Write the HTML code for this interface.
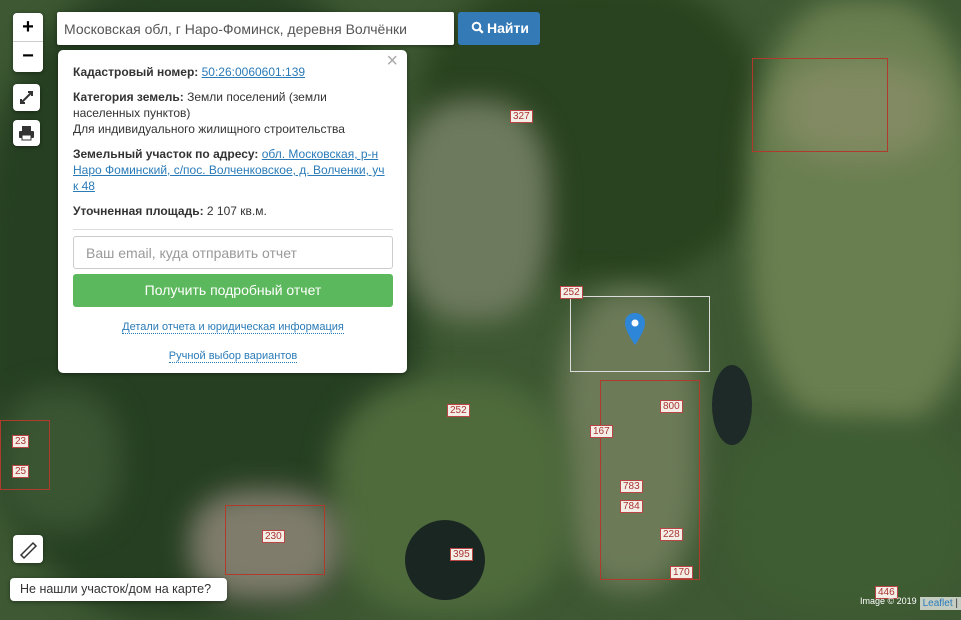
<!DOCTYPE html>
<html><head><meta charset="utf-8"><style>
*{box-sizing:border-box;margin:0;padding:0}
body{width:961px;height:612px;overflow:hidden;font-family:"Liberation Sans",Arial,sans-serif;position:relative;background:#3d5832}
.bl{position:absolute;border-radius:40%;filter:blur(14px)}
.box{position:absolute;background:#fff;border-radius:4px;box-shadow:0 1px 4px rgba(0,0,0,.4)}
.pl{position:absolute;border:1px solid #b03a2b}
.lbl{position:absolute;background:#f4efe6;color:#a33;font-size:10px;padding:0 2px;border:1px solid #b44}
a{color:#2a7bb8}
</style></head><body>
<!-- map -->
<div class="bl" style="left:-20px;top:-20px;width:440px;height:640px;background:#263f22"></div>
<div class="bl" style="left:420px;top:-20px;width:340px;height:300px;background:#29421f"></div>
<div class="bl" style="left:750px;top:0;width:230px;height:430px;background:#6a7f50"></div>
<div class="bl" style="left:780px;top:60px;width:160px;height:100px;background:#818a62"></div>
<div class="bl" style="left:400px;top:100px;width:150px;height:220px;background:#6e7a5e"></div>
<div class="bl" style="left:560px;top:290px;width:140px;height:300px;background:#6c7a58"></div>
<div class="bl" style="left:330px;top:380px;width:240px;height:232px;background:#4f6b3c"></div>
<div class="bl" style="left:190px;top:490px;width:150px;height:110px;background:#7f7c6c"></div>
<div class="bl" style="left:730px;top:420px;width:240px;height:190px;background:#3f5d33"></div>
<div class="bl" style="left:0;top:390px;width:120px;height:140px;background:#3a5532"></div>
<div style="position:absolute;left:712px;top:365px;width:40px;height:80px;border-radius:50%;background:#1d2a28"></div>
<div style="position:absolute;left:405px;top:520px;width:80px;height:80px;border-radius:50%;background:#1a2622"></div>
<div class="pl" style="left:752px;top:58px;width:136px;height:94px"></div>
<div class="pl" style="left:570px;top:296px;width:140px;height:76px;border-color:#ddd"></div>
<div class="pl" style="left:600px;top:380px;width:100px;height:200px"></div>
<div class="pl" style="left:0;top:420px;width:50px;height:70px"></div>
<div class="pl" style="left:225px;top:505px;width:100px;height:70px"></div>
<span class="lbl" style="left:510px;top:110px">327</span>
<span class="lbl" style="left:560px;top:286px">252</span>
<span class="lbl" style="left:447px;top:404px">252</span>
<span class="lbl" style="left:262px;top:530px">230</span>
<span class="lbl" style="left:450px;top:548px">395</span>
<span class="lbl" style="left:12px;top:435px">23</span>
<span class="lbl" style="left:12px;top:465px">25</span>
<span class="lbl" style="left:590px;top:425px">167</span>
<span class="lbl" style="left:660px;top:400px">800</span>
<span class="lbl" style="left:620px;top:480px">783</span>
<span class="lbl" style="left:620px;top:500px">784</span>
<span class="lbl" style="left:660px;top:528px">228</span>
<span class="lbl" style="left:670px;top:566px">170</span>
<span class="lbl" style="left:875px;top:586px">446</span>
<svg style="position:absolute;left:623px;top:312px" width="24" height="36" viewBox="0 0 24 36"><path d="M12 1C6 1 2 5 2 11c0 8 10 22 10 22s10-14 10-22C22 5 18 1 12 1z" fill="#2e86d8"/><circle cx="12" cy="11" r="3.5" fill="#fff"/></svg>
<!-- controls -->
<div class="box" style="left:13px;top:13px;width:30px;height:59px">
<div style="height:29px;border-bottom:1px solid #ccc;text-align:center;font:bold 20px/29px 'Liberation Sans';color:#000">+</div>
<div style="text-align:center;font:bold 20px/28px 'Liberation Sans';color:#000">−</div></div>
<div class="box" style="left:13px;top:84px;width:27px;height:27px"><svg width="27" height="27"><path d="M8 19L19 8M15 8h4v4M8 15v4h4" stroke="#333" stroke-width="2" fill="none"/></svg></div>
<div class="box" style="left:13px;top:120px;width:27px;height:26px"><svg width="27" height="26"><rect x="9" y="6" width="9" height="5" fill="#333"/><rect x="6" y="11" width="15" height="7" rx="1" fill="#333"/><rect x="9" y="15" width="9" height="5" fill="#fff" stroke="#333"/></svg></div>
<div class="box" style="left:57px;top:12px;width:397px;height:33px;border-radius:2px;font-size:14px;color:#555;padding:9px 7px;white-space:nowrap">Московская обл, г Наро-Фоминск, деревня Волчёнки</div>
<div style="position:absolute;left:458px;top:12px;width:82px;height:33px;background:#337ab7;border-radius:3px;color:#fff;font-size:14px;font-weight:bold;line-height:33px;padding-left:13px"><svg width="13" height="13" viewBox="0 0 13 13" style="vertical-align:-1px;margin-right:3px"><circle cx="5.5" cy="5.5" r="3.8" stroke="#fff" stroke-width="2" fill="none"/><path d="M8.3 8.3l3.5 3.5" stroke="#fff" stroke-width="2.4"/></svg>Найти</div>
<!-- popup -->
<div class="box" style="left:58px;top:50px;width:349px;height:323px;border-radius:5px;font-size:12px;color:#333;padding:14px 14px 0 15px;line-height:16px">
<div style="position:absolute;right:9px;top:3px;font-size:20px;color:#aaa">×</div>
<div><b>Кадастровый номер:</b> <a href="#">50:26:0060601:139</a></div>
<div style="margin-top:9px"><b>Категория земель:</b> Земли поселений (земли населенных пунктов)<br>Для индивидуального жилищного строительства</div>
<div style="margin-top:9px"><b>Земельный участок по адресу:</b> <a href="#">обл. Московская, р-н Наро Фоминский, с/пос. Волченковское, д. Волченки, уч к 48</a></div>
<div style="margin-top:9px"><b>Уточненная площадь:</b> 2 107 кв.м.</div>
<div style="border-top:1px solid #ddd;margin-top:10px"></div>
<div style="margin-top:6px;height:33px;border:1px solid #ccc;border-radius:3px;color:#999;font-size:14px;padding:8px 12px">Ваш email, куда отправить отчет</div>
<div style="margin-top:5px;height:33px;background:#5cb85c;border-radius:3px;color:#fff;font-size:14px;text-align:center;line-height:33px">Получить подробный отчет</div>
<div style="text-align:center;margin-top:12px;font-size:11px"><span style="color:#2a7bb8;border-bottom:1px dotted #2a7bb8">Детали отчета и юридическая информация</span></div>
<div style="text-align:center;margin-top:13px;font-size:11px"><span style="color:#2a7bb8;border-bottom:1px dotted #2a7bb8">Ручной выбор вариантов</span></div>
</div>
<!-- bottom -->
<div class="box" style="left:13px;top:535px;width:30px;height:28px"><svg width="30" height="28"><path d="M8 20L20 8l3 3-12 12z" fill="none" stroke="#333" stroke-width="1.5"/></svg></div>
<div class="box" style="left:10px;top:578px;width:217px;height:23px;font-size:12.5px;color:#333;padding:4px 10px;white-space:nowrap;overflow:hidden">Не нашли участок/дом на карте?</div>
<div style="position:absolute;right:0;top:597px;background:rgba(255,255,255,.7);font-size:10px;padding:1px 3px;color:#333"><span style="color:#2a7bb8">Leaflet</span> |</div>
<div style="position:absolute;left:860px;top:596px;font-size:9px;color:#fff">Image © 2019</div>
</body></html>
